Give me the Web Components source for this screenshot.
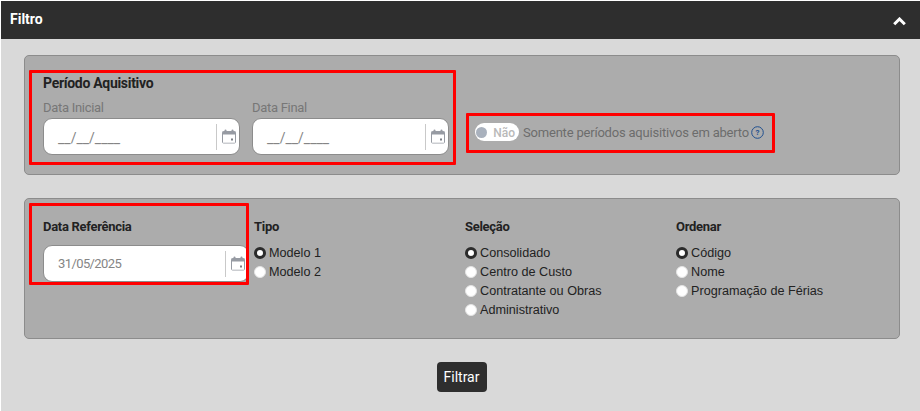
<!DOCTYPE html>
<html lang="pt-BR">
<head>
<meta charset="utf-8">
<title>Filtro</title>
<style>
  html, body { margin: 0; padding: 0; height: 100%; background: #fff; overflow: hidden; }
  body { font-family: Roboto, "Liberation Sans", sans-serif; }
</style>
</head>
<body>
<filter-page>
  <filter-panel>
    <div style="display:flex;align-items:flex-start">
      <red-mark style="--t:-5px;--r:-7px;--b:-10px;--l:-14px">
        <section-title style="--fs:14px">Período Aquisitivo</section-title>
        <div style="display:flex;gap:12px;margin-top:9px">
          <date-field label="Data Inicial" value="__/__/____"></date-field>
          <date-field label="Data Final" value="__/__/____"></date-field>
        </div>
      </red-mark>
      <red-mark style="margin:48px 0 0 26px;--t:-10px;--r:-11px;--b:-12px;--l:-9px">
        <open-toggle>Somente períodos aquisitivos em aberto</open-toggle>
      </red-mark>
    </div>
  </filter-panel>

  <filter-panel second>
    <div style="display:grid;grid-template-columns:repeat(4,211px);align-items:start">
      <red-mark style="--t:-16px;--r:5px;--b:-3px;--l:-14px">
        <section-title>Data Referência</section-title>
        <date-field style="margin-top:10px;--w:206px" value="31/05/2025" filled></date-field>
      </red-mark>
      <radio-group title="Tipo" checked="Modelo 1" options="Modelo 1|Modelo 2"></radio-group>
      <radio-group title="Seleção" checked="Consolidado" options="Consolidado|Centro de Custo|Contratante ou Obras|Administrativo"></radio-group>
      <radio-group title="Ordenar" checked="Código" options="Código|Nome|Programação de Férias"></radio-group>
    </div>
  </filter-panel>

  <filter-button>Filtrar</filter-button>
</filter-page>

<script>
const calendarIcon = `
  <svg width="14" height="15" viewBox="0 0 14 15" fill="none">
    <rect x="0.5" y="2.5" width="13" height="11.5" rx="1" stroke="#979ba3"/>
    <rect x="0.5" y="2.5" width="13" height="3" fill="#979ba3"/>
    <rect x="2.5" y="0.5" width="2" height="3.5" rx="1" fill="#979ba3"/>
    <rect x="9.5" y="0.5" width="2" height="3.5" rx="1" fill="#979ba3"/>
    <rect x="1" y="6" width="12" height="7.5" fill="#fff"/>
    <rect x="9" y="9.5" width="2" height="2" fill="#7b7f86"/>
  </svg>`;

class FilterPage extends HTMLElement {
  constructor() {
    super();
    this.attachShadow({ mode: 'open' });
    this.shadowRoot.innerHTML = `
      <style>
        :host {
          display: block;
          margin: 1px 0 0 1px;
          height: 410px;
          background: #d9d9d9;
        }
        header {
          height: 38px;
          background: #2e2e2e;
          color: #fff;
          display: flex;
          align-items: center;
          justify-content: space-between;
          padding: 0 14px 2px 9px;
          box-sizing: border-box;
          font-size: 14px;
          font-weight: 700;
        }
        svg { display: block; margin-top: 5px; }
        main {
          display: flex;
          flex-direction: column;
          gap: 23px;
          padding: 16px 20px 0 23px;
        }
      </style>
      <header>
        <span>Filtro</span>
        <svg width="13" height="9" viewBox="0 0 13 9" fill="none">
          <path d="M1.2 7.2 L6.5 2 L11.8 7.2" stroke="#fff" stroke-width="3"/>
        </svg>
      </header>
      <main><slot></slot></main>
    `;
  }
}

class FilterPanel extends HTMLElement {
  constructor() {
    super();
    this.attachShadow({ mode: 'open' });
    this.shadowRoot.innerHTML = `
      <style>
        :host {
          display: block;
          box-sizing: border-box;
          height: 120px;
          padding: 19px 0 0 18px;
          background: #acacac;
          border: 1px solid #8c8c8c;
          border-radius: 5px;
        }
        :host([second]) { height: 141px; padding-top: 20px; }
      </style>
      <slot></slot>
    `;
  }
}

class RedMark extends HTMLElement {
  constructor() {
    super();
    this.attachShadow({ mode: 'open' });
    this.shadowRoot.innerHTML = `
      <style>
        :host { display: block; position: relative; }
        .frame {
          position: absolute;
          top: var(--t); right: var(--r); bottom: var(--b); left: var(--l);
          border: 3px solid #ff0000;
          border-radius: 1px;
          pointer-events: none;
        }
      </style>
      <slot></slot>
      <div class="frame"></div>
    `;
  }
}

class SectionTitle extends HTMLElement {
  constructor() {
    super();
    this.attachShadow({ mode: 'open' });
    this.shadowRoot.innerHTML = `
      <style>
        :host {
          display: block;
          font-size: var(--fs, 13px);
          line-height: 16px;
          letter-spacing: -0.3px;
          font-weight: 700;
          color: #222;
        }
      </style>
      <slot></slot>
    `;
  }
}

class DateField extends HTMLElement {
  constructor() {
    super();
    this.attachShadow({ mode: 'open' });
    const label = this.getAttribute('label');
    this.shadowRoot.innerHTML = `
      <style>
        :host { display: block; }
        label {
          display: block;
          font-size: 13px;
          line-height: 16px;
          letter-spacing: -0.3px;
          color: #777;
          margin-bottom: 2px;
        }
        .box {
          box-sizing: border-box;
          width: var(--w, 197px);
          height: 37px;
          display: flex;
          align-items: center;
          background: #fff;
          border: 1px solid #8c8c8c;
          border-radius: 9px;
          padding-left: 14px;
        }
        .value {
          flex: 1;
          font-size: 14px;
          color: #858585;
          padding-top: 3px;
        }
        :host([filled]) .value {
          font-size: 13px;
          letter-spacing: -0.6px;
          padding-top: 0;
        }
        .sep {
          width: 1px;
          height: 26px;
          background: #c9c9c9;
        }
        .icon {
          box-sizing: border-box;
          width: 22px;
          display: flex;
          justify-content: center;
          padding: 0 0 0 1px;
        }
        svg { display: block; }
      </style>
      ${label ? `<label>${label}</label>` : ''}
      <div class="box">
        <span class="value">${this.getAttribute('value')}</span>
        <span class="sep"></span>
        <span class="icon">${calendarIcon}</span>
      </div>
    `;
  }
}

class OpenToggle extends HTMLElement {
  constructor() {
    super();
    this.attachShadow({ mode: 'open' });
    this.shadowRoot.innerHTML = `
      <style>
        :host {
          display: flex;
          align-items: center;
          gap: 4px;
          font-size: 13px;
          letter-spacing: -0.2px;
          color: #6c6c6c;
          white-space: nowrap;
        }
        .switch {
          box-sizing: border-box;
          width: 44px;
          height: 18px;
          border-radius: 9px;
          background: #fff;
          display: flex;
          align-items: center;
          justify-content: space-between;
          padding: 1px 4px 0 1px;
          font-size: 12px;
          letter-spacing: 0;
          font-weight: 500;
          color: #b9b9b9;
        }
        .knob { width: 11px; height: 11px; margin-top: -1px; border-radius: 50%; background: #a9b1bd; }
        .help { display: block; margin-left: -1.5px; margin-top: 1px; }
        .help text { font: 700 8px Roboto, sans-serif; fill: #1f4f8f; }
      </style>
      <span class="switch"><span class="knob"></span><span>Não</span></span>
      <span><slot></slot></span>
      <svg class="help" width="13" height="13" viewBox="0 0 13 13">
        <circle cx="6.5" cy="6.5" r="5.8" fill="none" stroke="#1f4f8f" stroke-width="1"/>
        <text x="6.5" y="9.3" text-anchor="middle">?</text>
      </svg>
    `;
  }
}

class RadioGroup extends HTMLElement {
  constructor() {
    super();
    this.attachShadow({ mode: 'open' });
    const checked = this.getAttribute('checked');
    const rows = this.getAttribute('options').split('|').map(opt => `
      <div class="row">
        <span class="dot ${opt === checked ? 'on' : ''}"></span>
        <span>${opt}</span>
      </div>`).join('');
    this.shadowRoot.innerHTML = `
      <style>
        :host { display: block; }
        h3 {
          margin: 0 0 8px;
          font-size: 13px;
          line-height: 16px;
          letter-spacing: -0.3px;
          font-weight: 700;
          color: #222;
        }
        .row {
          display: flex;
          align-items: center;
          gap: 3px;
          height: 19px;
          font-family: "Liberation Sans", Arial, sans-serif;
          font-size: 12.65px;
          color: #222;
          white-space: nowrap;
        }
        .dot {
          box-sizing: border-box;
          width: 12px;
          height: 12px;
          border-radius: 50%;
          background: #fff;
          border: 1px solid #e4e4e4;
        }
        .dot.on { border: 3.5px solid #2b2b2b; }
      </style>
      <h3>${this.getAttribute('title')}</h3>
      ${rows}
    `;
  }
}

class FilterButton extends HTMLElement {
  constructor() {
    super();
    this.attachShadow({ mode: 'open' });
    this.shadowRoot.innerHTML = `
      <style>
        :host { display: flex; justify-content: center; padding-right: 1px; }
        button {
          width: 50px;
          height: 30px;
          padding: 0;
          border: none;
          border-radius: 4px;
          background: #2e2e2e;
          color: #fff;
          font-family: Roboto, sans-serif;
          font-size: 14px;
          font-weight: 400;
        }
      </style>
      <button><slot></slot></button>
    `;
  }
}

customElements.define('filter-page', FilterPage);
customElements.define('filter-panel', FilterPanel);
customElements.define('red-mark', RedMark);
customElements.define('section-title', SectionTitle);
customElements.define('date-field', DateField);
customElements.define('open-toggle', OpenToggle);
customElements.define('radio-group', RadioGroup);
customElements.define('filter-button', FilterButton);
</script>
</body>
</html>
